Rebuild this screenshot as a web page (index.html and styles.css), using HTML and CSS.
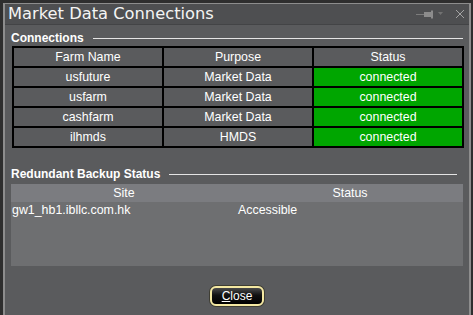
FILE: index.html
```html
<!DOCTYPE html>
<html lang="en">
<head>
  <meta charset="UTF-8" />
  <title>Market Data Connections</title>
  <link rel="stylesheet" href="styles.css">
</head>
<body>

  <div class="dialog">
    <div class="titlebar">
      <span class="title">Market Data Connections</span>
      <svg class="tools" width="50" height="20" viewBox="0 0 50 20">
        <!-- pin -->
        <line x1="0" y1="10.5" x2="8" y2="10.5" stroke="#7c7c7c" stroke-width="1"/>
        <rect x="8" y="8" width="7" height="5" fill="#8c8c8c"/>
        <rect x="15" y="6.5" width="2" height="8" fill="#8c8c8c"/>
        <!-- menu arrow -->
        <polygon points="22,8 27,8 24.5,11" fill="#727272"/>
        <!-- close -->
        <path d="M40 6 L48 14 M48 6 L40 14" stroke="#a3a3a3" stroke-width="1"/>
      </svg>
    </div>

    <div class="content">
      <div class="section-head">Connections</div>
      <table class="conn">
        <tr><th>Farm Name</th><th>Purpose</th><th>Status</th></tr>
        <tr><td>usfuture</td><td>Market Data</td><td class="ok">connected</td></tr>
        <tr><td>usfarm</td><td>Market Data</td><td class="ok">connected</td></tr>
        <tr><td>cashfarm</td><td>Market Data</td><td class="ok">connected</td></tr>
        <tr><td>ilhmds</td><td>HMDS</td><td class="ok">connected</td></tr>
      </table>

      <div class="section-head backup-label">Redundant Backup Status</div>
      <div class="backup">
        <div class="backup-head"><span>Site</span><span>Status</span></div>
        <div class="backup-row"><span>gw1_hb1.ibllc.com.hk</span><span>Accessible</span></div>
      </div>

      <div class="actions">
        <button class="btn"><u>C</u>lose</button>
      </div>
    </div>
  </div>

</body>
</html>
```

FILE: styles.css
```css
* {
  box-sizing: border-box;
}

html, body {
  margin: 0;
  height: 100%;
  overflow: hidden;
}

body {
  background: #2e2e2e;
  color: #fff;
  font-family: "Liberation Sans", Arial, sans-serif;
  font-size: 12.4px;
}

.dialog {
  margin: 3px 0 0 3px;
  width: 468px;
  height: 312px;
  border: solid #8d8d8d;
  border-width: 1px 2px 0 2px;
  background: #5a5b5d;
  display: flex;
  flex-direction: column;
}

.titlebar {
  height: 21px;
  display: flex;
  align-items: center;
  padding: 0 3px 0 3px;
  background: #4e4f51;
  border-bottom: 1px solid #434446;
}

.title {
  font-family: "DejaVu Sans", sans-serif;
  font-size: 16.3px;
  line-height: 20px;
  color: #f4f4f4;
}

.tools {
  margin-left: auto;
  display: block;
}

.content {
  padding: 6px 0 0 6px;
}

.section-head {
  display: flex;
  align-items: center;
  font-weight: bold;
  font-size: 12px;
  line-height: 14px;
}

.section-head::after {
  content: "";
  flex: 1;
  height: 1px;
  background: #e4e4e4;
  margin: 0 6px 0 9px;
}

.backup-label {
  margin-top: 19px;
}

.backup-label::after {
  margin-right: 12px;
}

.conn {
  margin: 1px 0 0 1px;
  width: 452px;
  table-layout: fixed;
  border-collapse: separate;
  border-spacing: 0;
  border-top: 2px solid #000;
  border-left: 2px solid #000;
}

.conn th,
.conn td {
  padding: 0;
  font-weight: normal;
  text-align: center;
  line-height: 18px;
  border-right: 2px solid #000;
  border-bottom: 2px solid #000;
}

.conn td.ok {
  background: #00a600;
}

.backup {
  margin-top: 3px;
  width: 452px;
  height: 82px;
  background: #6e6f71;
}

.backup-head,
.backup-row {
  display: grid;
  grid-template-columns: 226px 226px;
}

.backup-head {
  background: #7b7c80;
  line-height: 18px;
  text-align: center;
}

.backup-row {
  line-height: 16px;
}

.backup-row span {
  padding-left: 1px;
}

.actions {
  margin: 20px 0 0 -6px;
  display: flex;
  justify-content: center;
}

.btn {
  width: 54px;
  height: 20px;
  padding: 0;
  border: 2px solid #f4e8a2;
  border-radius: 6px;
  box-shadow: 0 0 0 1px #3e3d33;
  background: linear-gradient(to bottom, #4a4a4a 0%, #111 45%, #000 100%);
  color: #fff;
  font-family: "Liberation Sans", Arial, sans-serif;
  font-size: 12px;
  line-height: 16px;
}
```
